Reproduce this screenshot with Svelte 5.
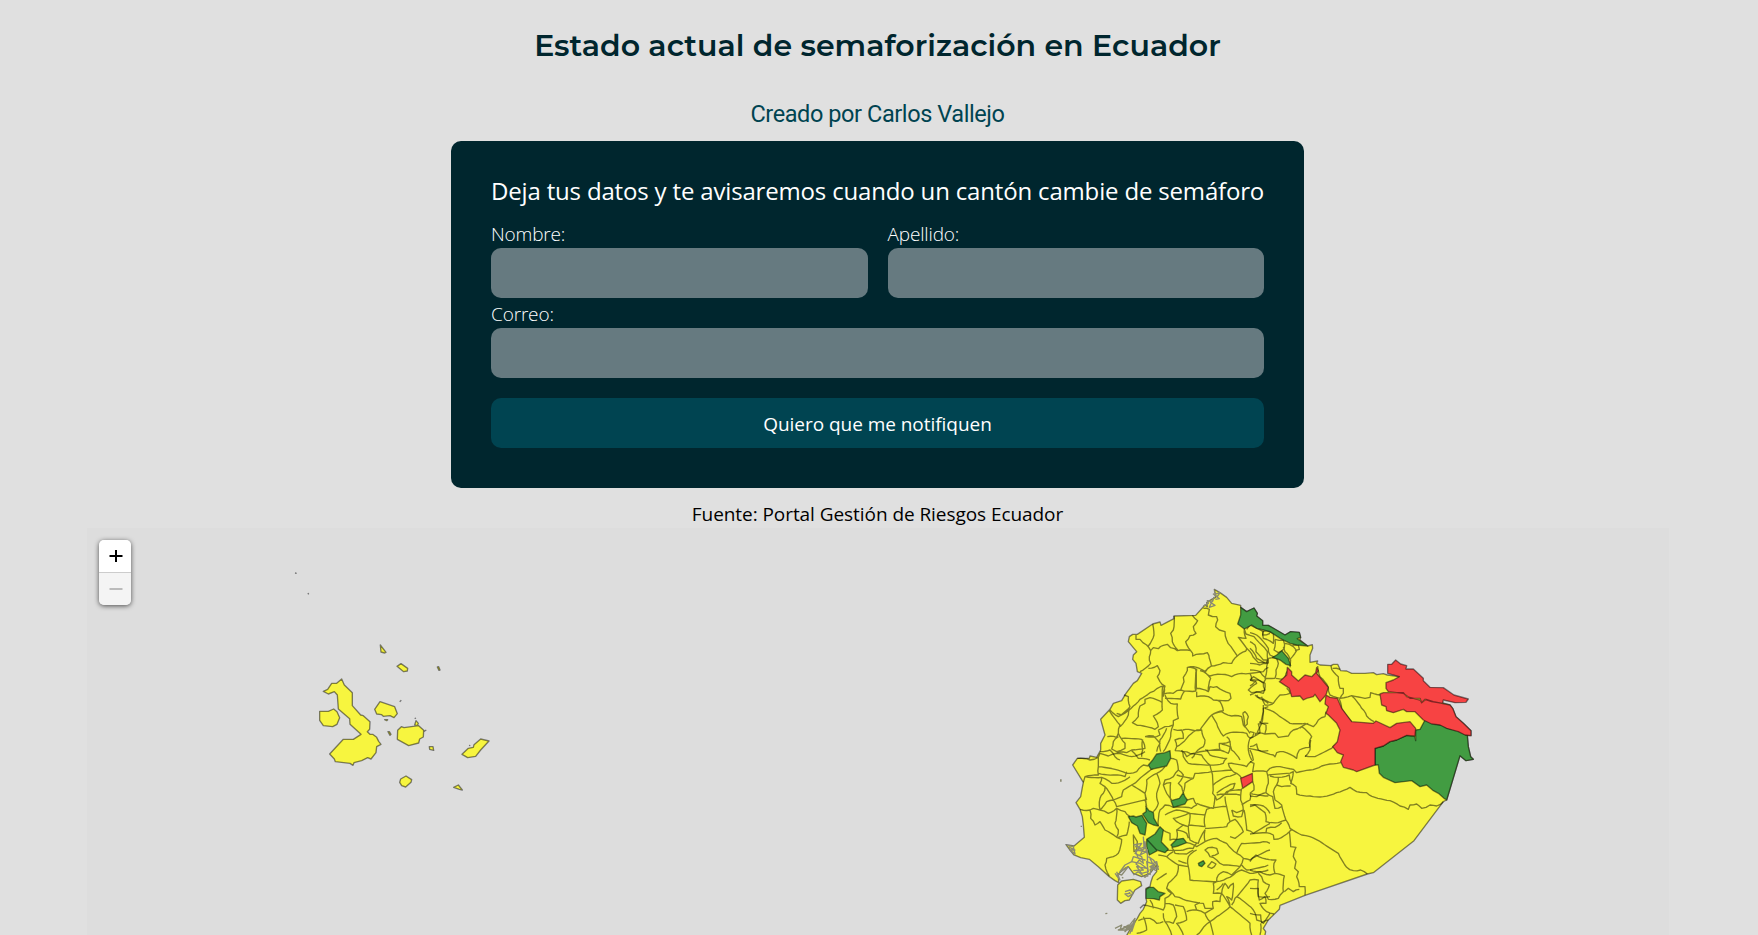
<script>
  // Breaks long straight borders into short irregular steps, the same way on every load
  function roughen(part) {
    const n = part.trim().split(/\s+/).map(Number);
    let out = n[0] + ' ' + n[1];
    for (let i = 2; i < n.length; i += 2) {
      const [x0, y0, x1, y1] = [n[i - 2], n[i - 1], n[i], n[i + 1]];
      const len = Math.hypot(x1 - x0, y1 - y0);
      const steps = Math.floor(len / 9);
      for (let k = 1; k < steps; k++) {
        const t = k / steps;
        const h = Math.sin(x0 * 12.9 + y1 * 78.2 + k * 37.7) * 2.1;
        out += ` ${(x0 + (x1 - x0) * t - ((y1 - y0) / len) * h).toFixed(1)} ${(y0 + (y1 - y0) * t + ((x1 - x0) / len) * h).toFixed(1)}`;
      }
      out += ` ${x1} ${y1}`;
    }
    return out;
  }
  const borders = (s) => s.split('|').map((p) => 'M' + roughen(p)).join('');
  const lines = (s) => s.split('|').map((p) => 'M' + p.trim()).join('');
  const shapes = (s) => s.split('|').map((p) => 'M' + p.trim() + 'Z').join('');

  // Mainland silhouette, in thirds of a pixel
  const land = shapes(`493 28 510 38 530 52 545 70 572 76 572 82 590 95 612 84 622 100 620 108 638 122 638 136 655 136 705 165 722 155 748 157 752 172 750 180 773 198 787 194 788 205 780 225 780 247 803 243 800 250 810 255 843 257 850 253 863 253 872 272 890 273 905 280 945 280 970 278 980 284 1000 281 1012 285 1048 290 1020 325 1200 375 1208 385 1218 410 1240 430 1263 452 1263 467 1252 467 1255 500 1262 530 1270 538 1248 542 1230 527 1190 660 1180 665 1092 782 970 878 952 882 765 946 690 976 688 988 655 1020 640 1045 647 1055 643 1075 225 1075 245 1040 262 1015 270 1000 280 988 290 965 288 955 288 925 300 920 303 905 308 890 320 875 320 855 300 880 275 890 250 880 235 860 225 865 205 882 206 908 195 902 178 890 145 860 118 838 92 833 72 825 60 810 48 794 72 798 103 772 100 735 97 710 90 688 78 668 92 650 97 622 100 607 68 555 82 535 118 535 120 528 140 532 152 510 152 490 165 465 152 418 180 388 190 370 215 362 228 340 250 310 262 302 275 280 262 275 258 250 248 238 250 225 260 215 235 185 238 170 248 163 262 163 308 132 330 126 333 136 372 116 372 108 437 106 465 75 472 80 470 68 485 58 497 52`);
  const north = borders(`258 165 258 178 270 178 290 195 302 212 310 203 325 206 340 196 352 193 362 203 382 212 422 212 428 220 428 228 450 222 472 218 478 235 484 256|308 132 312 165 295 198|372 108 370 150 362 160 367 185 383 210|427 106 443 122 430 140 438 160 420 167 407 185 422 212|460 85 478 88 475 105 500 110 503 120 497 140 508 150 525 155 530 180 543 200 562 228 588 213|562 228 545 250 520 248 484 258 465 277|588 213 590 205 565 172 588 175 583 147|590 205 610 232 625 248 655 250|583 147 588 162 612 170 635 195 652 215 655 250|590 148 600 135 640 155 638 165 660 160|302 212 298 230 302 250 270 275|295 265 322 257 330 272 322 290 330 305 345 318 322 325 300 338 270 358 250 378 215 405 200 400|180 390 205 410 240 380 235 350 222 345|178 392 210 435 205 460 200 472 172 470|240 385 235 405 210 440|342 318 342 342 370 340 380 332 392 330 437 333 440 268 412 262 408 280 400 292 402 305 392 330|337 368 300 353 285 358 285 370 270 378 265 410 247 428 262 436 315 448 325 440 322 428 310 408 337 390 338 320|345 355 392 357 405 332|345 345 362 370 382 372 385 415 370 422 370 435 345 440 325 450|412 262 440 262 465 274 485 258|440 270 440 325 475 335 482 295 468 280 450 272|465 277 480 288 515 283 545 290 575 280 600 280 640 275 655 262|600 280 605 300 615 300 620 310 595 330 605 338 640 340 645 310 625 300 600 300|475 335 480 320 500 320 540 340 543 355 535 362 490 360 475 350 440 350 440 335|437 268 437 333|490 360 510 365 520 392 485 405 450 450 440 450 410 475 380 500 375 512|485 405 500 430 520 468 540 458 590 460 600 475 630 458 625 432 655 430|485 405 515 395 545 408 575 410 580 435 600 460|578 400 585 395 595 410 592 432 583 440 578 400|615 345 640 360 655 370|655 380 640 385 630 430|370 448 395 450 400 475 375 480 380 500|350 445 330 480 332 515|370 435 362 470 340 515|398 450 425 450 455 450 465 480 460 500 435 520 425 535|465 510 510 510 508 490 540 485 530 470|510 510 535 520 540 500 515 492|540 485 545 510 570 540|600 475 595 510 605 540|595 505 620 510 655 512|205 460 225 490 225 505 200 515 185 507 190 485 205 470|215 475 275 478 285 505 245 510 230 518 200 518|285 470 310 468 330 490 320 515|278 478 278 510 275 530|150 515 180 510 195 530 210 540|245 512 265 535 300 540|325 450 330 465 320 470 285 470|375 512 400 515 410 530 440 518 510 508|345 318 340 350`);
  const east = borders(`0 158 20 165 40 185 55 205 60 225 75 232|0 185 15 195 18 215 40 240 50 240 50 250 30 255 0 250|0 205 20 235 45 250|38 155 40 175 70 190 70 160 50 152 38 155|75 178 100 180 103 205 85 218 72 210 75 178|105 190 130 200 140 212 120 238 105 215 100 200|128 195 145 195 148 208 135 212|55 235 80 235 85 250 78 270 75 295 45 295 50 260 55 235|78 295 100 298 108 280 115 270|0 270 30 275 48 295 40 310 10 290 0 300|0 300 15 305 0 318|40 310 45 330 20 335 0 345|20 345 25 352 45 360 70 370 90 345 120 340 110 325|35 350 45 375 68 372|120 262 122 238|203 258 210 290 235 322 240 345 270 355 280 340 280 325 270 325 265 290 245 268 243 257|270 355 305 347 345 355 360 352 362 338 390 345|268 357 275 385 305 425|305 347 335 385 350 408 372 425|248 265 270 268|45 385 70 395 90 410 120 430 165 430 190 440 205 420 225 410 228 395|40 385 35 430 25 450 15 465|15 460 45 462 75 460 85 472 100 470 115 468 130 450 155 440 185 470 178 490 180 510 165 530|28 425 48 435 45 460|0 455 12 458 8 470 0 475|40 385 40 375|150 445 175 430`);
  const coast = borders(`82 25 120 30 145 22 150 10 175 18 210 10 245 20 285 5|145 22 145 50 195 58 230 70 260 65 280 45 295 48|145 50 145 75 105 80 100 97|105 80 155 82 150 100 165 110 160 130 150 145 150 180 130 175 120 180 90 178|145 70 190 75 225 80 230 65|155 82 185 100 215 95 240 80|165 110 190 150 215 140 220 120 245 105 285 130 290 150|150 180 170 155 190 150|120 180 122 205 135 225 150 215 165 240 200 262 215 268 205 310 190 320 170 325 165 345 178 378|150 180 175 190 200 175 225 185 240 200|200 175 195 220 205 240 200 262|205 262 230 255 238 215|190 150 200 170 285 150 290 170|245 105 265 90 310 55|285 130 290 90 320 70 345 50|285 130 288 170|320 70 330 100 320 130 325 160 310 185|362 25 380 30 385 60 370 80 345 90 340 105 350 130 365 150|385 60 400 75 385 100 395 110 400 128|340 105 362 98 362 150|395 0 400 20 415 40 480 45 485 65 545 60 560 70 575 85|380 75 430 85 435 70 485 65|400 5 420 10 455 15 480 45 520 40 530 25 480 15 470 0|430 85 405 100 400 128|485 65 488 130 500 150 530 125 575 120|490 105 530 80 560 70|500 130 530 110 555 100 550 115 530 130|440 160 490 175 495 140|412 150 430 145 440 165 425 175 370 172|370 172 345 165 330 180 325 228|345 195 380 180 420 190 415 230 380 215 370 205 415 190|415 190 465 195 465 230 415 225|465 195 470 178 530 170 540 215 530 230 465 235|500 135 570 135|530 170 525 140|545 180 560 188 580 180 575 200 550 198 545 180|575 115 572 150 580 180|545 60 535 40 590 50 610 30 600 0|600 130 600 150 575 165|600 130 655 138|608 95 612 120 600 130|600 165 640 168 660 190|540 215 555 208 580 245 555 265 540 260|582 180 590 240 610 250 660 220|415 230 420 270 445 280 465 240 465 275 440 290 410 278|338 240 360 250 360 270 380 268 380 240 410 250 415 265|380 240 400 225 415 230|465 275 500 265 530 280 560 310 580 325 570 350 520 345 500 330 480 320 465 300 475 293 500 295 505 310 485 318|345 300 400 300 430 295 440 280|365 292 375 310 410 312 430 300|325 315 350 320 385 345 415 350 415 320 440 300|350 320 370 305|385 345 380 375 355 400 350 415 365 430|385 332 410 340|415 350 420 390 500 395 505 375 520 365 545 375 570 350|472 350 485 335 498 342 485 355 472 350|350 415 375 440 400 448 460 460 465 475 490 475 488 455 510 455 515 430 490 430 490 400 500 395|365 430 345 445 345 460 370 465 380 500 370 520 345 515 340 490|270 475 280 465 340 480 345 460|340 515 320 520 300 505 265 512|280 500 290 540 260 550|345 515 365 555|375 465 400 470 410 510 380 520 400 555|410 485 440 480 465 490 480 515 500 500 540 470 515 430|440 480 435 465 450 458|465 490 490 475|480 515 490 555|480 515 455 540 440 555|540 470 600 520 605 555|545 465 555 445 600 390 625 390 625 440 660 440|500 395 530 385 550 375 575 360 600 370 655 360|515 430 525 400 535 415 550 400 545 450 530 440 540 470|520 400 500 420|580 325 600 330 660 300|575 345 590 360 655 345|560 310 575 280 640 275 660 280|560 440 610 480 620 510 640 520 660 490|630 555 632 520|320 390 350 370|300 450 310 475`);
  const jungle = borders(`0 20 20 12 25 30 70 45 75 50 80 38 100 35 140 55 148 30 178 22 182 0|165 48 195 50 245 25 255 15|0 65 12 70 8 95 50 95 60 85 90 80 130 88 140 98 180 90 215 78 240 72 272 68|55 105 110 100 130 95 122 130 138 140 140 162 180 168 220 170 260 158 300 142 320 155 350 158 375 172 420 182 450 198 475 208 480 195 500 192 515 205 540 195 560 198 580 185|50 95 55 130 48 158 20 170 0 168|60 108 85 112 80 135 95 140 122 138|85 112 118 105 125 130|48 158 68 170 75 205 95 200|80 135 70 155 75 180 95 195 108 240 120 265 155 285 180 290 215 308 265 340 290 382 310 392 332 390 352 402|0 200 15 195 45 218 48 245 85 248 108 240|95 248 75 262 50 265 48 278 70 285 72 298 85 297 118 275 125 268|0 282 48 278|118 275 122 320 138 322 130 350 138 365 134 385 145 395 140 410 148 440 165 440 165 466|103 455 115 445 130 455 148 448|0 365 18 345 48 357 78 360 72 370 75 400|0 390 30 395 60 405 75 400 103 408 100 455 85 475 55 478 45 460 58 435 40 425 35 410 25 400|0 445 25 445 28 480 45 470 48 490 30 490 50 515 72 522|0 520 32 525 35 548 55 540`);

  const galapagos = shapes(`70 154 83 148 95 130 110 130 125 117 133 135 157 158 157 197 182 225 190 227 210 245 209 268 202 275 210 283 218 283 230 292 236 304 243 313 230 320 228 338 213 357 203 353 185 362 162 368 159 376 150 370 106 365 103 357 89 342 130 298 160 298 183 283 150 253 149 236 115 207 112 165 103 155 85 162|59 214 85 214 101 207 111 215 119 233 111 253 98 260 70 257 59 241|224 208 240 185 284 200 292 221 282 233 270 227 250 229 245 224 230 222|293 271 304 260 312 263 356 257 371 271 370 291 359 297 356 309 326 317 292 298|241 15 258 37 254 39 243 36|291 79 303 71 323 85 322 93 311 95|412 81 416 80 420 90 417 91|254 239 263 239 260 242|264 275 268 275 273 283 270 286|344 255 348 242 355 250 352 257|388 320 399 320 401 331 389 328|486 343 505 325 520 322 522 314 542 297 567 303 542 330 527 349 503 353|302 417 318 408 335 419 333 427 317 441 305 437 299 427|461 442 475 435 487 450 478 448`);
  const green = shapes(`572 82 590 95 612 84 622 100 620 108 638 122 638 136 655 136 705 165 722 155 748 157 752 172 742 176 773 198 740 195 720 190 690 175 660 155 640 150 620 145 605 135 583 147 563 132 572 105|668 232 680 225 695 212 715 235 722 257 708 253 690 240|1125 420 1160 425 1155 432 1175 435 1195 445 1225 452 1252 467 1255 500 1262 530 1270 538 1248 542 1230 527 1190 660 1182 655 1165 640 1150 632 1130 615 1110 620 1085 602 1035 608 1000 592 988 580 985 555 975 555 975 505 1000 498 1020 485 1040 480 1070 466 1095 470 1097 482 1097 450 1110 448|360 512 345 518 320 522 308 540 295 555 303 568 350 558 362 535|363 662 388 655 400 638 405 650 412 660 405 672 370 682|235 710 250 708 258 711 276 706 281 715 290 730 285 765 270 760 262 738 245 728|278 702 288 695 288 680 297 692 310 697 312 715 325 738 310 735 295 728|290 778 315 762 330 740 340 750 334 786 355 808 345 818 320 810|290 778 322 812 298 825 290 800|363 795 380 778 400 775 410 788 385 798 368 802|445 850 460 842 465 850 455 860 447 857|288 928 297 922 310 922 325 935 345 940 330 950 328 960 310 956 288 955`);
  const red = shapes(`688 305 710 285 712 262 725 275 725 285 745 303 765 285 785 290 797 278 800 262 805 272 800 280 835 322 828 345 810 365 795 343 790 350 770 355 760 360 750 348 725 350 718 325|828 345 840 352 862 355 875 385 905 425 970 430 978 423 1020 443 1040 430 1080 425 1097 445 1095 468 1070 466 1040 480 1020 485 1000 498 975 505 975 555 920 575 910 570 880 562 872 545 880 525 862 518 848 500 862 485 870 450 860 430 835 405 828 400 835 380 825 372|1013 253 1025 253 1037 240 1052 252 1070 257 1068 267 1090 267 1120 295 1120 302 1140 322 1180 323 1212 345 1255 357 1248 367 1215 368 1180 360 1178 370 1145 365 1125 358 1115 368 1110 355 1080 355 1060 340 1015 335 1008 325 1008 308 1030 300 1048 290 1013 280|990 342 1000 338 1060 338 1070 350 1110 360 1115 368 1128 358 1150 365 1200 375 1208 385 1218 410 1240 430 1263 452 1263 467 1245 465 1225 455 1190 445 1170 435 1145 432 1120 420 1095 395 1070 395 1060 388 1030 398 1010 392 1008 380 995 375|572 595 607 580 608 605 578 625`);
  const puna = shapes(`203 405 215 393 250 388 272 395 275 407 255 420 238 450 225 452 212 460 202 450|250 255 262 275 260 300 252 305`);

  // Mangrove channels of the Guayas delta and the northern estuaries
  const delta = lines(`250 285 275 280 262 300 285 290 270 315 290 305 255 300 265 325 285 330 250 320 245 335 270 340 290 355 260 350 275 370 295 365 290 335 315 345 300 360 325 350 310 330 295 320|245 335 225 345 210 365 235 350 215 375 200 370|280 260 282 290 292 300 293 380|250 375 265 365 285 382 300 370|310 340 320 335 325 358 305 350 300 375|260 285 275 300 285 295 285 275 290 310|255 290 270 292 255 310 275 320 280 340 268 330 258 342 280 360 250 362|300 325 310 345 300 350 318 362|200 365 210 390 195 370|225 425 240 420 250 430 235 440 225 432 240 430 235 422|460 -432 475 -440 472 -448 488 -446 492 -458 478 -428 495 -434 480 -444|493 -478 497 -468 510 -472 502 -460 490 -468 508 -454 496 -452|195 535 215 525 210 540 235 525 225 545 250 520 240 550 255 505 235 530 205 540 230 540 245 535 222 530 250 530 255 515 245 545|50 286 70 290 75 312 60 300 75 300 58 292 72 298`);
  const specks = lines(`30 90 35 90M30 93 35 93|92 229 96 229|166 491 172 490|200 378 205 380|216 382 220 385`);
</script>

<main>
  <h1>Estado actual de semaforización en Ecuador</h1>
  <p class="author">Creado por Carlos Vallejo</p>

  <form onsubmit={(e) => e.preventDefault()}>
    <h2>Deja tus datos y te avisaremos cuando un cantón cambie de semáforo</h2>
    <div class="names">
      <label><span>Nombre:</span><input type="text" /></label>
      <label><span>Apellido:</span><input type="text" /></label>
    </div>
    <label><span>Correo:</span><input type="email" /></label>
    <button class="send">Quiero que me notifiquen</button>
  </form>

  <p class="source">Fuente: Portal Gestión de Riesgos Ecuador</p>

  <section class="map">
    <svg viewBox="87 528 1582 407" width="1582" height="407">
      <g transform="translate(1050 580) scale(.33333)">
        <path class="y" d={land} />
        <path d={north} />
        <g transform="translate(600 0)"><path d={east} /></g>
        <g transform="translate(0 510)"><path d={coast} /></g>
        <g transform="translate(600 480)"><path d={jungle} /></g>
        <path class="g" d={green} />
        <path class="r" d={red} />
        <g transform="translate(0 510)">
          <path class="y" d={puna} />
          <path class="delta" d={delta} />
          <path class="delta" d={specks} />
        </g>
      </g>
      <g transform="translate(300 640) scale(.33333)">
        <path class="y" d={galapagos} />
        <path d="M299 185L304 181M344 236L348 234M372 274L379 270M507 316L511 317" />
        <path d="M-15 -201L-10 -200M24 -141L26 -137" />
      </g>
    </svg>
    <div class="zoom">
      <button aria-label="Acercar"><svg viewBox="0 0 32 32"><path d="M10.5 16H23.5M17 10V22" /></svg></button>
      <button class="off" aria-label="Alejar"><svg viewBox="0 0 32 32"><path d="M10.5 16H23.5" /></svg></button>
    </div>
  </section>
</main>

<style>
  :global(body) { margin: 0; background: #e0e0e0; overflow: hidden; }
  * { box-sizing: border-box; }
  main {
    width: 1755px;
    height: 935px;
    overflow: hidden;
    display: flex;
    flex-direction: column;
    align-items: center;
    font-family: 'Segoe UI', 'Open Sans', sans-serif;
  }
  h1, h2, p { margin: 0; white-space: nowrap; }
  h1 {
    margin-top: 26px;
    font: 600 30px/40px Montserrat, Inter, sans-serif;
    letter-spacing: .03px;
    color: #00262e;
  }
  .author { margin-top: 32px; height: 43px; font: 400 23.5px/32px Roboto, sans-serif; letter-spacing: -.41px; color: #004451; }
  form {
    width: 853px;
    height: 347px;
    padding: 33px 40px 40px;
    border-radius: 10px;
    background: #00262e;
    color: #fff;
  }
  h2 { font-size: 24px; font-weight: 400; line-height: 34px; margin-bottom: 13px; letter-spacing: -.17px; }
  .names { display: grid; grid-template-columns: 1fr 1fr; gap: 20px; }
  label { display: block; height: 80px; font-size: 19px; font-weight: 300; line-height: 27px; letter-spacing: -.15px; }
  label span { display: block; height: 27px; }
  input {
    display: block;
    width: 100%;
    height: 50px;
    border: 0;
    border-radius: 10px;
    background: #667a80;
  }
  .send {
    display: block;
    width: 100%;
    height: 50px;
    margin-top: 17px;
    padding: 2px 0 0;
    border: 0;
    border-radius: 10px;
    background: #004451;
    color: #fff;
    font: 400 19px 'Segoe UI', 'Open Sans', sans-serif;
    letter-spacing: -.04px;
  }
  .source { height: 40px; padding-top: 12px; font-size: 19px; line-height: 28px; letter-spacing: -.06px; color: #000; }
  .map { position: relative; width: 1582px; height: 407px; flex: none; background: #ddd; }
  .map > svg { display: block; }
  path { fill: none; stroke: rgba(0, 0, 0, .48); stroke-width: 1.35px; vector-effect: non-scaling-stroke; stroke-linejoin: round; }
  .y { fill: #f7f53f; }
  .g { fill: #429c42; }
  .r { fill: #f74343; }
  .delta { stroke: #8b8b72; }
  .zoom {
    position: absolute;
    left: 12px;
    top: 12px;
    width: 32px;
    border-radius: 5px;
    overflow: hidden;
    box-shadow: 0 1px 5px rgba(0, 0, 0, .65);
  }
  .zoom button { display: block; width: 32px; height: 32px; padding: 0; border: 0; background: #fff; }
  .zoom .off { height: 33px; border-top: 1px solid #ccc; background: #f4f4f4; }
  .zoom svg { display: block; width: 32px; height: 32px; }
  .zoom path { vector-effect: none; stroke: #000; stroke-width: 2px; }
  .zoom .off path { stroke: #bbb; }
</style>
